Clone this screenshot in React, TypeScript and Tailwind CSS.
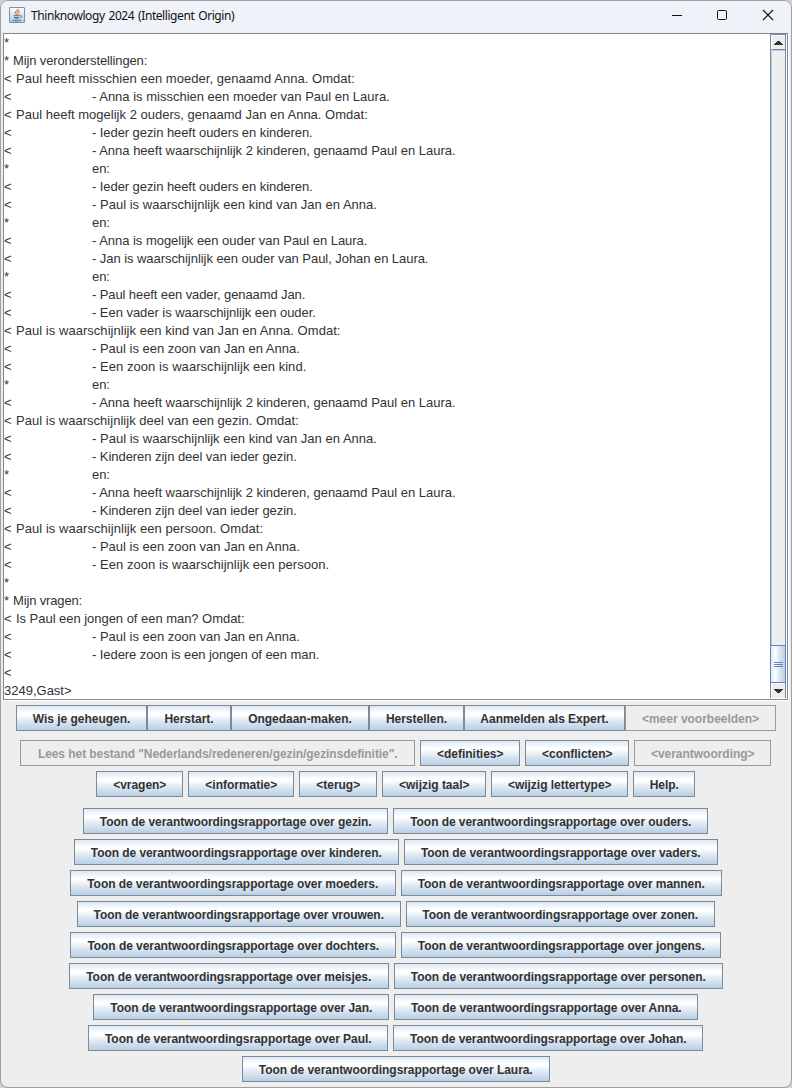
import React from "react";

type Line = { mark: string; text: string; indented?: boolean; tracking?: number };

const line = (mark: string, text = "", tracking = 0): Line => ({ mark, text, tracking });
const sub = (mark: string, text: string, tracking = 0): Line => ({ mark, text, tracking, indented: true });

const lines: Line[] = [
  line("*"),
  line("*", "Mijn veronderstellingen:", -0.13),
  line("<", "Paul heeft misschien een moeder, genaamd Anna. Omdat:", 0.04),
  sub("<", "- Anna is misschien een moeder van Paul en Laura."),
  line("<", "Paul heeft mogelijk 2 ouders, genaamd Jan en Anna. Omdat:", 0.01),
  sub("<", "- Ieder gezin heeft ouders en kinderen.", -0.07),
  sub("<", "- Anna heeft waarschijnlijk 2 kinderen, genaamd Paul en Laura.", -0.01),
  sub("*", "en:", -0.1),
  sub("<", "- Ieder gezin heeft ouders en kinderen.", -0.07),
  sub("<", "- Paul is waarschijnlijk een kind van Jan en Anna.", 0.02),
  sub("*", "en:", -0.1),
  sub("<", "- Anna is mogelijk een ouder van Paul en Laura.", -0.03),
  sub("<", "- Jan is waarschijnlijk een ouder van Paul, Johan en Laura.", -0.055),
  sub("*", "en:", -0.1),
  sub("<", "- Paul heeft een vader, genaamd Jan.", -0.1),
  sub("<", "- Een vader is waarschijnlijk een ouder.", -0.04),
  line("<", "Paul is waarschijnlijk een kind van Jan en Anna. Omdat:", 0.04),
  sub("<", "- Paul is een zoon van Jan en Anna.", -0.01),
  sub("<", "- Een zoon is waarschijnlijk een kind.", 0.05),
  sub("*", "en:", -0.1),
  sub("<", "- Anna heeft waarschijnlijk 2 kinderen, genaamd Paul en Laura.", -0.01),
  line("<", "Paul is waarschijnlijk deel van een gezin. Omdat:", 0.02),
  sub("<", "- Paul is waarschijnlijk een kind van Jan en Anna.", 0.02),
  sub("<", "- Kinderen zijn deel van ieder gezin.", -0.05),
  sub("*", "en:", -0.1),
  sub("<", "- Anna heeft waarschijnlijk 2 kinderen, genaamd Paul en Laura.", -0.01),
  sub("<", "- Kinderen zijn deel van ieder gezin.", -0.05),
  line("<", "Paul is waarschijnlijk een persoon. Omdat:", 0.05),
  sub("<", "- Paul is een zoon van Jan en Anna.", -0.01),
  sub("<", "- Een zoon is waarschijnlijk een persoon.", 0.04),
  line("*"),
  line("*", "Mijn vragen:", -0.15),
  line("<", "Is Paul een jongen of een man? Omdat:", -0.035),
  sub("<", "- Paul is een zoon van Jan en Anna.", -0.01),
  sub("<", "- Iedere zoon is een jongen of een man.", -0.07),
  line("<"),
];

type ButtonSpec = [label: string, width: number, disabled?: boolean];

const toolbar: ButtonSpec[] = [
  ["Wis je geheugen.", 131],
  ["Herstart.", 84],
  ["Ongedaan-maken.", 138],
  ["Herstellen.", 95],
  ["Aanmelden als Expert.", 161],
  ["<meer voorbeelden>", 151, true],
];

const commands: ButtonSpec[][] = [
  [
    ['Lees het bestand "Nederlands/redeneren/gezin/gezinsdefinitie".', 395, true],
    ["<definities>", 100],
    ["<conflicten>", 104],
    ["<verantwoording>", 137, true],
  ],
  [
    ["<vragen>", 87],
    ["<informatie>", 106],
    ["<terug>", 78],
    ["<wijzig taal>", 104],
    ["<wijzig lettertype>", 137],
    ["Help.", 62],
  ],
];

const reports: [string, number][][] = [
  [["gezin", 305], ["ouders", 315]],
  [["kinderen", 325], ["vaders", 314]],
  [["moeders", 326], ["mannen", 321]],
  [["vrouwen", 324], ["zonen", 309]],
  [["dochters", 326], ["jongens", 320]],
  [["meisjes", 320], ["personen", 329]],
  [["Jan", 296], ["Anna", 304]],
  [["Paul", 300], ["Johan", 310]],
  [["Laura", 308]],
];

function MetalButton({ spec: [label, width, disabled] }: { spec: ButtonSpec }) {
  return (
    <button
      disabled={disabled}
      style={{ width }}
      className={`flex h-[26px] shrink-0 items-center justify-center border pt-[2px] text-[12px] leading-[14px] font-bold whitespace-nowrap ${
        label.length > 30 ? "tracking-[-0.06px]" : "tracking-[-0.02px]"
      } ${
        disabled
          ? "border-[#999999] bg-[#eeeeee] text-[#999999]"
          : "border-[#7a8a99] bg-[linear-gradient(to_bottom,#dde8f3_0%,#ffffff_30%,#ffffff_36%,#dce7f2_64%,#b8cfe5_100%)] text-[#333333]"
      }`}
    >
      {label}
    </button>
  );
}

function ButtonRow({ items }: { items: ButtonSpec[] }) {
  return (
    <div className="flex justify-center gap-[5px] pr-[0.5px]">
      {items.map((spec) => (
        <MetalButton key={spec[0]} spec={spec} />
      ))}
    </div>
  );
}

function JavaIcon() {
  return (
    <svg width="16" height="16" viewBox="0 0 16 16" fill="none" className="mb-[2px]">
      <defs>
        <linearGradient id="tile" x1="0" y1="0" x2="0" y2="1">
          <stop offset="0" stopColor="#ffffff" />
          <stop offset="1" stopColor="#b5c9d8" />
        </linearGradient>
      </defs>
      <rect x="0.5" y="0.5" width="15" height="15" rx="0.5" fill="url(#tile)" stroke="#7792a8" />
      <path d="M9 1.6c1 1.8-3.6 2.8-2.6 4.5.4.7 1.2 1 1 1.8M10.8 3.8c-1.6.8-2.6 1.5-1.7 2.5.4.6.2 1.1-.4 1.6" stroke="#e8762c" strokeWidth="1.2" />
      <path d="M4.6 8.7h6M5 10.5h5.2M5.6 12h4M3.3 13.4c2.5.9 6.6.8 8.8-.2M11 8.7c2.2-.6 2.2 1.5.1 2.2" stroke="#4f7898" strokeWidth="1" />
    </svg>
  );
}

function TitleBar() {
  return (
    <header className="flex h-[30px] shrink-0 items-center bg-[#f0f2f9] pl-2">
      <JavaIcon />
      <h1 className="ml-[6px] flex-1 font-['Noto_Sans',sans-serif] text-[12px] leading-4 tracking-[-0.43px] [word-spacing:1.2px] text-[#111111]">
        Thinknowlogy 2024 (Intelligent Origin)
      </h1>
      <svg width="120" height="30" viewBox="0 0 120 30" fill="none" stroke="#111111" className="shrink-0">
        <path d="M1 14.5h10" shapeRendering="crispEdges" />
        <rect x="46.5" y="9.5" width="9" height="9" rx="1" />
        <path d="M92 9l10 10M102 9l-10 10" strokeWidth="1.1" />
      </svg>
    </header>
  );
}

function ScrollBar() {
  return (
    <div className="mr-px mb-px flex w-[16px] shrink-0 flex-col border-x border-t border-[#7a8a99] bg-[#eeeeee]">
      <div className="flex h-[15px] items-center justify-center border-t border-b border-l border-t-white border-b-[#7a8a99] border-l-white">
        <svg width="9" height="4" viewBox="0 0 9 4" shapeRendering="crispEdges">
          <path d="M0 4h9V3H8V2H7V1H6V0H3v1H2v1H1v1H0z" fill="#333333" />
        </svg>
      </div>
      <div className="flex-1 border-t border-l border-[#b8cfe5]" />
      <div className="-mx-px flex h-[38px] flex-col items-center justify-center gap-px border border-[#6382bf] bg-[linear-gradient(to_right,#dde8f3,#ffffff_30%,#dce7f2_60%,#b8cfe5)]">
        <i className="h-px w-[9px] bg-[#6382bf]" />
        <i className="h-px w-[9px] bg-[#6382bf]" />
        <i className="h-px w-[9px] bg-[#6382bf]" />
      </div>
      <div className="flex h-[15px] items-center justify-center border-t border-l border-white">
        <svg width="9" height="4" viewBox="0 0 9 4" shapeRendering="crispEdges">
          <path d="M0 0h9v1H8v1H7v1H6v1H3V3H2V2H1V1H0z" fill="#333333" />
        </svg>
      </div>
    </div>
  );
}

export default function App() {
  return (
    <div className="h-[1088px] w-[792px] bg-[#cfcfcf] font-['Liberation_Sans',Arial,sans-serif]">
      <div className="flex h-full w-full flex-col overflow-hidden rounded-[8px] border border-[#a0a0a0] bg-[#eeeeee]">
        <TitleBar />
        <main className="flex flex-1 flex-col px-[2px] pt-[2px]">
          <section className="flex h-[667px] w-[785px] shrink-0 border border-[#7a8a99] bg-white shadow-[1px_1px_0_#ffffff]">
            <pre className="flex-1 font-['Liberation_Sans',Arial,sans-serif] text-[13px] leading-[18px] text-[#333333]">
              {lines.map(({ mark, text, indented, tracking }, i) => (
                <div key={i} className="flex h-[18px]">
                  <span className={indented ? "w-[88px]" : mark === "*" ? "w-[9px]" : "w-[12px]"}>{mark}</span>
                  <span style={{ letterSpacing: tracking }}>{text}</span>
                </div>
              ))}
              <div>3249,Gast&gt;</div>
            </pre>
            <ScrollBar />
          </section>
          <nav className="mt-[5px] flex pl-[13px]">
            {toolbar.map((spec) => (
              <MetalButton key={spec[0]} spec={spec} />
            ))}
          </nav>
          <div className="mt-[9px] flex flex-col gap-[5px]">
            {commands.map((row, i) => (
              <ButtonRow key={i} items={row} />
            ))}
          </div>
          <div className="mt-[11px] flex flex-col gap-[5px]">
            {reports.map((row, i) => (
              <ButtonRow
                key={i}
                items={row.map(([subject, width]): ButtonSpec => [
                  `Toon de verantwoordingsrapportage over ${subject}.`,
                  width,
                ])}
              />
            ))}
          </div>
        </main>
      </div>
    </div>
  );
}
